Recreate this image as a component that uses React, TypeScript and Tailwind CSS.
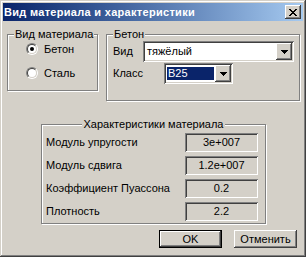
import React from "react";

const raised =
  "shadow-[inset_-1px_-1px_#404040,inset_1px_1px_#ffffff,inset_-2px_-2px_#808080,inset_2px_2px_#D4D0C8]";
const sunken =
  "shadow-[inset_1px_1px_#808080,inset_-1px_-1px_#ffffff,inset_2px_2px_#404040,inset_-2px_-2px_#D4D0C8]";

function Group({
  label,
  className,
  center,
  children,
}: {
  label: string;
  className: string;
  center?: boolean;
  children?: React.ReactNode;
}) {
  return (
    <div
      className={
        "relative border border-[#808080] shadow-[1px_1px_0_#ffffff,inset_1px_1px_0_#ffffff] " +
        className
      }
    >
      <div
        className={
          "absolute top-[-8px] flex " +
          (center ? "left-0 right-0 justify-center" : "left-[6px]")
        }
      >
        <span className="bg-[#D4D0C8] px-[1px] leading-[14px] text-[11px] text-black">
          {label}
        </span>
      </div>
      {children}
    </div>
  );
}

function Radio({ checked, label }: { checked?: boolean; label: string }) {
  return (
    <div className="flex items-center h-[12px] gap-[6px]">
      <div className="w-[12px] h-[12px] rounded-full border border-t-[#808080] border-l-[#808080] border-b-white border-r-white">
        <div className="w-full h-full rounded-full border border-t-[#404040] border-l-[#404040] border-b-[#D4D0C8] border-r-[#D4D0C8] bg-white flex items-center justify-center">
          {checked && <div className="w-[4px] h-[4px] rounded-full bg-black" />}
        </div>
      </div>
      <span className="text-[11px] leading-[12px]">{label}</span>
    </div>
  );
}

function Arrow() {
  return (
    <svg width="7" height="4" viewBox="0 0 7 4" shapeRendering="crispEdges">
      <path d="M0 0h7v1h-1v1h-1v1h-1v1h-1v-1h-1v-1h-1v-1h-1z" fill="#000" />
    </svg>
  );
}

function Combo({
  text,
  selected,
  className,
}: {
  text: string;
  selected?: boolean;
  className: string;
}) {
  return (
    <div className={"bg-white p-[2px] flex " + sunken + " " + className}>
      <div className="flex-1 flex items-center pl-[1px] pr-[1px]">
        <span
          className={
            "text-[11px] leading-[13px] px-[1px] " +
            (selected ? "bg-[#0A246A] text-white w-full" : "text-black")
          }
        >
          {text}
        </span>
      </div>
      <div
        className={
          "w-[16px] h-full bg-[#D4D0C8] flex items-center justify-center " +
          raised
        }
      >
        <Arrow />
      </div>
    </div>
  );
}

function ValueRow({ label, value }: { label: string; value: string }) {
  return (
    <div className="flex items-center">
      <span className="w-[139px] text-[11px] leading-[13px]">{label}</span>
      <div
        className={
          "w-[73px] h-[19px] flex items-center justify-center text-[11px] " +
          sunken
        }
      >
        {value}
      </div>
    </div>
  );
}

export default function App() {
  return (
    <div
      className="w-[306px] h-[257px] bg-[#D4D0C8] p-[3px] flex flex-col text-black shadow-[inset_-1px_-1px_#404040,inset_1px_1px_#D4D0C8,inset_-2px_-2px_#808080,inset_2px_2px_#ffffff]"
      style={{ fontFamily: '"Liberation Sans", Arial, sans-serif' }}
    >
      {/* Title bar */}
      <div className="h-[18px] bg-linear-to-r from-[#0A246A] to-[#A6CAF0] flex items-center justify-between pl-[1px] pr-[2px]">
        <span className="text-white font-bold text-[11px] tracking-[0.3px] leading-[14px]">
          Вид материала и характеристики
        </span>
        <div
          className={
            "w-[16px] h-[14px] bg-[#D4D0C8] flex items-center justify-center " +
            raised
          }
        >
          <svg width="8" height="7" viewBox="0 0 8 7" shapeRendering="crispEdges">
            <path
              d="M0 0h2v1h1v1h2v-1h1v-1h2v1h-1v1h-1v1h-1v1h1v1h1v1h1v1h-2v-1h-1v-1h-2v1h-1v1h-2v-1h1v-1h1v-1h1v-1h-1v-1h-1v-1h-1z"
              fill="#000"
            />
          </svg>
        </div>
      </div>

      {/* Row 1 */}
      <div className="flex items-start mt-[13px]">
        <Group label="Вид материала" className="ml-[4px] w-[91px] h-[57px]">
          <div className="flex flex-col gap-[12px] pt-[8px] pl-[18px]">
            <Radio checked label="Бетон" />
            <Radio label="Сталь" />
          </div>
        </Group>
        <Group label="Бетон" className="ml-[8px] w-[194px] h-[67px]">
          <div className="flex flex-col pt-[6px] pl-[6px]">
            <div className="flex items-center">
              <span className="w-[30px] text-[11px] leading-[13px]">Вид</span>
              <Combo text="тяжёлый" className="w-[151px] h-[21px]" />
            </div>
            <div className="flex items-center mt-[1px]">
              <span className="w-[51px] text-[11px] leading-[13px]">Класс</span>
              <Combo text="B25" selected className="w-[69px] h-[21px]" />
            </div>
          </div>
        </Group>
      </div>

      {/* Characteristics */}
      <Group
        label="Характеристики материала"
        center
        className="mt-[23px] ml-[38px] w-[225px] h-[100px]"
      >
        <div className="flex flex-col gap-[4px] pt-[8px] pl-[4px]">
          <ValueRow label="Модуль упругости" value="3e+007" />
          <ValueRow label="Модуль сдвига" value="1.2e+007" />
          <ValueRow label="Коэффициент Пуассона" value="0.2" />
          <ValueRow label="Плотность" value="2.2" />
        </div>
      </Group>

      {/* Buttons */}
      <div className="flex justify-end gap-[12px] mt-[6px] pr-[6px]">
        <div className="w-[63px] h-[18px] border border-black">
          <div
            className={
              "w-full h-full flex items-center justify-center text-[11px] " +
              raised
            }
          >
            OK
          </div>
        </div>
        <div
          className={
            "w-[63px] h-[18px] flex items-center justify-center text-[11px] " +
            raised
          }
        >
          Отменить
        </div>
      </div>
    </div>
  );
}
